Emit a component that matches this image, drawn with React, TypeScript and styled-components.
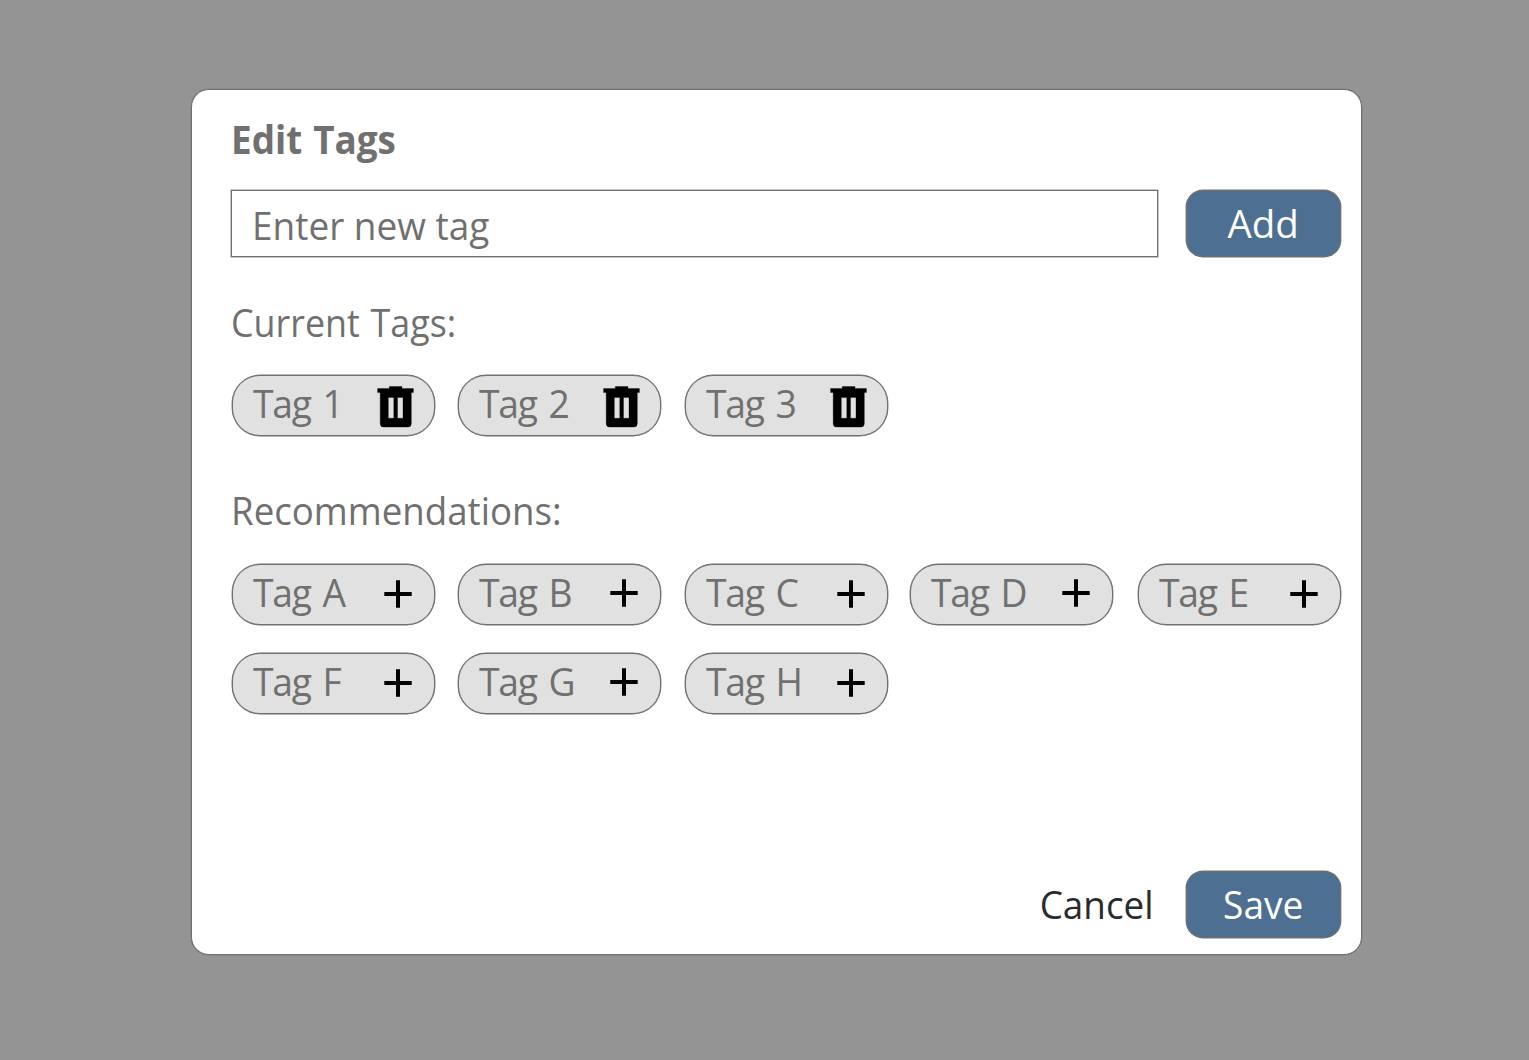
import React from "react";
import styled, { createGlobalStyle } from "styled-components";

const Global = createGlobalStyle`
  * { box-sizing: border-box; }
  html, body { margin: 0; background: #949494; }
`;

const Overlay = styled.div`
  width: 1529px;
  height: 1060px;
  padding: 89px 0 0 191px;
  background: #949494;
  font-family: "Open Sans", "Noto Sans", sans-serif;
  font-size: 39px;
  color: #707070;
`;

const Dialog = styled.section`
  display: flex;
  flex-direction: column;
  width: 1171px;
  height: 866px;
  padding: 22px 20px 16px 40px;
  background: #fff;
  border: 1px solid #707070;
  border-radius: 18px;
  box-shadow: 0 0 0 0.3px #707070;
`;

const Label = styled.span<{ $scale: number; $origin?: string; $lift?: number; $tight?: boolean; $gap?: number }>`
  display: block;
  margin-top: ${(p) => -2 * (p.$lift ?? 0)}px;
  white-space: nowrap;
  line-height: 54px;
  letter-spacing: ${(p) => (p.$tight ? "-1.3px" : "0")};
  word-spacing: ${(p) => (p.$tight ? 3.5 : p.$gap ?? 0)}px;
  transform: scaleX(${(p) => p.$scale});
  transform-origin: ${(p) => p.$origin ?? "left"} center;
`;

const Heading = styled.h2<{ $top?: number; $bold?: boolean }>`
  margin: ${(p) => p.$top ?? 0}px 0 0 -1px;
  height: 54px;
  font-size: 39px;
  font-weight: ${(p) => (p.$bold ? 700 : 400)};
`;

const EntryRow = styled.div`
  display: flex;
  gap: 28px;
  margin-top: 24px;
`;

const Field = styled.div`
  flex: 1;
  display: flex;
  align-items: center;
  height: 67px;
  margin-left: -1px;
  padding: 2px 0 0 20px;
  border: 1px solid #707070;
  box-shadow: 0 0 0 0.4px #707070;
`;

const Button = styled.button`
  display: flex;
  align-items: center;
  justify-content: center;
  width: 155px;
  height: 67px;
  padding: 0;
  border: 1px solid #707070;
  border-radius: 17px;
  background: #4d6f91;
  box-shadow: 0 0 0 0.4px #707070;
  color: #fff;
  font: inherit;
`;

const Tags = styled.div<{ $top: number }>`
  display: grid;
  grid-template-columns: 226px 227px 225px 228px 203px;
  row-gap: 28px;
  margin-top: ${(p) => p.$top}px;
`;

const Tag = styled.div`
  display: flex;
  align-items: center;
  justify-content: space-between;
  width: 203px;
  height: 61px;
  padding: 0 22px 0 20px;
  border: 1px solid #707070;
  border-radius: 28px;
  background: #e1e1e1;
  box-shadow: 0 0 0 0.4px #707070;
`;

const Footer = styled.footer`
  display: flex;
  justify-content: flex-end;
  align-items: center;
  gap: 32px;
  margin-top: auto;
`;

const Cancel = styled.button`
  padding: 0;
  border: 0;
  background: none;
  color: #2b2b2b;
  font: inherit;
`;

const TrashIcon = styled.svg`
  flex: none;
  width: 38px;
  height: 43px;
  margin: 2px -2px 0 0;
`;

const PlusIcon = styled.svg<{ $raised: boolean }>`
  flex: none;
  width: 28px;
  height: 28px;
  margin-bottom: ${(p) => (p.$raised ? 3 : 0.8)}px;
`;

const Trash = () => (
  <TrashIcon viewBox="0 0 38 43">
    <path
      fillRule="evenodd"
      stroke="#000"
      strokeOpacity="0.35"
      strokeWidth="1"
      d="M1.6 3.6H13.3V1.6H26V3.6H37.4V7.6H35.3V38.5Q35.3 42 32 42H7.4Q4.2 42 4.2 38.5V7.6H1.6ZM12.3 12.4V33.3H17.8V12.4ZM21.5 12.4V33.3H27V12.4Z"
    />
  </TrashIcon>
);

const Plus = ({ raised }: { raised: boolean }) => (
  <PlusIcon $raised={raised} viewBox="0 0 28 28">
    <path d="M0.3 14H27.7M14 0.3V27.7" stroke="#000" strokeWidth="4" />
  </PlusIcon>
);

const current = ["1", "2", "3"];
const recommended = ["A", "B", "C", "D", "E", "F", "G", "H"];

export default function App() {
  return (
    <Overlay>
      <Global />
      <Dialog>
        <Heading as="h1" $bold><Label $scale={0.945} $gap={1.5}>Edit Tags</Label></Heading>
        <EntryRow>
          <Field><Label $scale={0.948}>Enter new tag</Label></Field>
          <Button><Label $scale={0.985} $origin="center" $lift={0.5}>Add</Label></Button>
        </EntryRow>
        <Heading $top={38}><Label $scale={0.92} $gap={1.5}>Current Tags:</Label></Heading>
        <Tags $top={26}>
          {current.map((t) => (
            <Tag key={t}><Label $scale={0.955} $lift={3} $tight>Tag {t}</Label><Trash /></Tag>
          ))}
        </Tags>
        <Heading $top={47}><Label $scale={0.94}>Recommendations:</Label></Heading>
        <Tags $top={27}>
          {recommended.map((t) => (
            <Tag key={t}>
              <Label $scale={0.955} $lift={3} $tight>Tag {t}</Label>
              <Plus raised={"BDG".includes(t)} />
            </Tag>
          ))}
        </Tags>
        <Footer>
          <Cancel><Label $scale={0.945} $origin="right" $lift={0.5}>Cancel</Label></Cancel>
          <Button><Label $scale={0.95} $origin="center" $lift={0.5}>Save</Label></Button>
        </Footer>
      </Dialog>
    </Overlay>
  );
}
